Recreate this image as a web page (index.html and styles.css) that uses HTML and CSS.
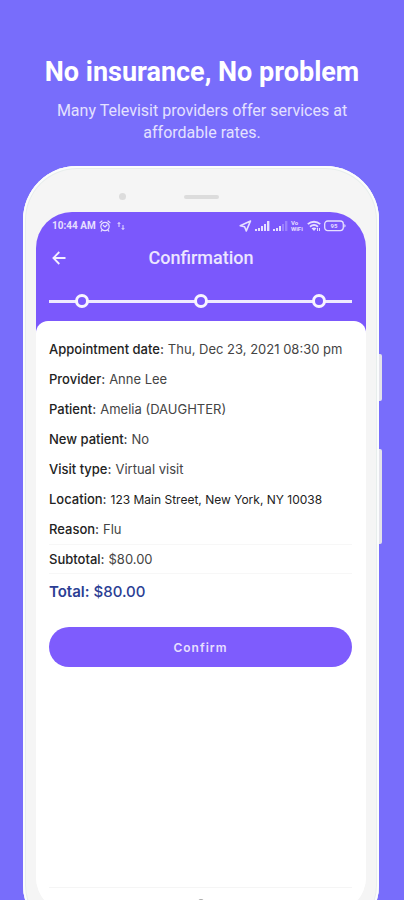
FILE: index.html
```
<!DOCTYPE html>
<html lang="en">
	<head>
		<title>Televisit - Confirmation</title>
		<meta charset="utf-8">
		<meta name="viewport" content="width=device-width, initial-scale=1">
		<link rel="stylesheet" href="styles.css">
	</head>
	<body>
		<header class="intro">
			<h1>No insurance, No problem</h1>
			<p>Many Televisit providers offer services at affordable rates.</p>
		</header>

		<div class="phone">
			<span class="side-key power"></span>
			<span class="side-key volume"></span>
			<div class="bezel">
				<span class="camera"></span>
				<span class="speaker"></span>
			</div>

			<main class="screen">
				<div class="statusbar">
					<span class="time">10:44 AM</span>
					<svg width="12" height="12" viewBox="0 0 12 12" fill="none" stroke="#e6dfff" stroke-width="1.2" stroke-linecap="round">
						<circle cx="6" cy="6.5" r="4.2"/>
						<path d="M1 2.6 3 1M11 2.6 9 1M4.3 5.5 6 7l2-2M3 10.2l-.8.9M9 10.2l.8.9"/>
					</svg>
					<svg class="data" width="8" height="10" viewBox="0 0 8 10" fill="none" stroke="#e6dfff" stroke-width="1">
						<path d="M2 6V1.5M.7 3 2 1.5 3.3 3M6 4v4.5M4.7 7 6 8.5 7.3 7"/>
					</svg>
					<span class="spacer"></span>
					<svg width="13" height="12" viewBox="0 0 13 12" fill="none" stroke="#e6dfff" stroke-width="1.6" stroke-linejoin="round">
						<path d="M11.5 1 1.2 5.7l4.4 1.1 1.7 4.1z"/>
					</svg>
					<svg width="15" height="12" viewBox="0 0 15 12" fill="#e6dfff">
						<path d="M0 9h2v2H0zM3 8h2v3H3zM6 6h2v5H6zM9 4h2v7H9zM12 1h2.4v10H12z"/>
					</svg>
					<svg width="15" height="12" viewBox="0 0 15 12" fill="#e6dfff">
						<path d="M0 9h2v2H0zM3 8h2v3H3zM6 6h2v5H6z"/>
						<path opacity=".3" d="M9 4h2v7H9zM12 1h2.4v10H12z"/>
					</svg>
					<span class="volte">Vo<br>WiFi</span>
					<svg width="14" height="12" viewBox="0 0 14 12" fill="none" stroke="#e6dfff" stroke-width="1.8">
						<path d="M.8 4.2c3.6-3.3 8.8-3.3 12.4 0M3 6.7c2.4-2 5.6-2 8 0"/>
						<path fill="#e6dfff" stroke="none" d="M4.5 8.3c1.6-1.2 3.4-1.2 5 0L7 11zM10 8h1v3h-1zM12 8h1v3h-1z"/>
					</svg>
					<svg width="22" height="12" viewBox="0 0 22 12">
						<rect x=".7" y="1" width="18.6" height="9.6" rx="3" fill="none" stroke="#e6dfff" stroke-width="1.3"/>
						<path d="M20.3 4v3.6q1.3-.4 1.3-1.8T20.3 4z" fill="#e6dfff"/>
						<text class="charge" x="10" y="8.3" text-anchor="middle">95</text>
					</svg>
				</div>

				<nav class="titlebar">
					<button type="button" class="back" aria-label="Back">
						<svg width="14" height="14" viewBox="0 0 14 14" fill="none" stroke="#f3efff" stroke-width="1.8">
							<path d="M13.5 7H1.5M7.3 1 1.4 7l5.9 6"/>
						</svg>
					</button>
					<h2>Confirmation</h2>
				</nav>

				<div class="steps">
					<span class="step"></span>
					<span class="step"></span>
					<span class="step"></span>
				</div>

				<section class="card">
					<dl class="details">
						<div class="row"><dt>Appointment date:</dt><dd>Thu, Dec 23, 2021 08:30 pm</dd></div>
						<div class="row"><dt>Provider:</dt><dd>Anne Lee</dd></div>
						<div class="row"><dt>Patient:</dt><dd>Amelia (DAUGHTER)</dd></div>
						<div class="row"><dt>New patient:</dt><dd>No</dd></div>
						<div class="row"><dt>Visit type:</dt><dd>Virtual visit</dd></div>
						<div class="row"><dt>Location:</dt><dd class="address">123 Main Street, New York, NY 10038</dd></div>
						<div class="row"><dt>Reason:</dt><dd>Flu</dd></div>
						<div class="row subtotal"><dt>Subtotal:</dt><dd>$80.00</dd></div>
						<div class="row total"><dt>Total:</dt><dd>$80.00</dd></div>
					</dl>
					<button type="button" class="confirm">Confirm</button>
					<footer class="bottom"><span class="home"></span></footer>
				</section>
			</main>
		</div>
	</body>
</html>
```
FILE: styles.css
```
* {
	box-sizing: border-box;
}
body {
	margin: 0;
	height: 100vh;
	overflow: hidden;
	background-color: #786dfb;
	font-family: Roboto, sans-serif;
}
.intro {
	padding: 56px 40px 22px;
	text-align: center;
	color: #fff;
}
.intro h1 {
	margin: 0 0 12px;
	font-size: 27px;
	line-height: 32px;
	font-weight: 700;
	white-space: nowrap;
}
.intro p {
	margin: 0;
	font-size: 16px;
	line-height: 22px;
	color: #e4e1ff;
}

/* phone */
.phone {
	position: relative;
	margin: 0 25px 0 23px;
	padding: 0 13px 26px;
	background-color: #f5f5f5;
	border-radius: 54px;
	box-shadow: inset 0 0 0 2px #fbfcfd, inset 0 0 0 3px #e8eeec;
}
.side-key {
	position: absolute;
	left: 100%;
	width: 3px;
	background-color: #e3e2ea;
	border-radius: 0 2px 2px 0;
}
.power {
	top: 188px;
	height: 47px;
}
.volume {
	top: 283px;
	height: 95px;
}
.bezel {
	display: flex;
	justify-content: center;
	align-items: center;
	gap: 58px;
	height: 46px;
	padding: 15px 65px 0 0;
}
.camera {
	width: 7px;
	height: 7px;
	border-radius: 50%;
	background-color: #dcdcdc;
}
.speaker {
	width: 35px;
	height: 4px;
	border-radius: 2px;
	background-color: #dcdcdc;
}
.screen {
	background: linear-gradient(#7b58fc, #7b58fc) top / 100% 130px no-repeat #fff;
	border-radius: 36px;
	overflow: hidden;
}

/* status bar */
.statusbar {
	display: flex;
	align-items: center;
	gap: 3px;
	height: 28px;
	padding: 0 20px 0 16px;
	color: #e6dfff;
}
.time {
	font-size: 10px;
	font-weight: 700;
	line-height: 12px;
}
.data {
	margin-left: 3px;
}
.spacer {
	flex: 1;
}
.volte {
	width: 13px;
	font-size: 6px;
	line-height: 6px;
	font-weight: 700;
}
.charge {
	font-size: 6px;
	font-weight: 700;
	fill: #e6dfff;
}

/* title */
.titlebar {
	display: grid;
	grid-template-columns: 20px 1fr 20px;
	align-items: center;
	height: 36px;
	padding: 0 14px;
}
.back {
	display: flex;
	padding: 2px;
	border: none;
	background: none;
	cursor: pointer;
}
.titlebar h2 {
	margin: 0;
	font-size: 18px;
	line-height: 24px;
	font-weight: 500;
	text-align: center;
	color: #ece6ff;
}
.steps {
	display: flex;
	justify-content: space-between;
	margin: 18px 14px 13px 13px;
	padding: 0 26px;
	background: linear-gradient(#efeaff, #efeaff) center / 100% 3px no-repeat;
}
.step {
	width: 14px;
	height: 14px;
	border: 3px solid #f7f4ff;
	border-radius: 50%;
	background-color: #7b58fc;
}

/* card */
.card {
	padding: 13px 14px 0 13px;
	background-color: #fff;
	border-radius: 12px 12px 0 0;
	font-family: Inter, sans-serif;
}
.details {
	margin: 0;
}
.row {
	display: flex;
	align-items: center;
	gap: 4px;
	height: 30px;
	font-size: 13px;
	white-space: nowrap;
	color: #444;
}
.row dt {
	font-weight: 500;
	color: #222;
}
.row dd {
	margin: 0;
}
.row .address {
	font-size: 12px;
	color: #222;
}
.subtotal {
	border-top: 1px solid #f7f7f7;
	border-bottom: 1px solid #f7f7f7;
}
.total {
	height: 34px;
	font-size: 15px;
	font-weight: 500;
	color: #2b3e94;
}
.total dt {
	font-weight: 600;
	color: #2b3e94;
}
.confirm {
	display: block;
	width: 100%;
	height: 40px;
	margin-top: 19px;
	border: none;
	border-radius: 20px;
	background-color: #7e5cfd;
	color: #e6dfff;
	font-family: Inter, sans-serif;
	font-size: 12px;
	font-weight: 600;
	letter-spacing: 1px;
	cursor: pointer;
}
.bottom {
	margin-top: 220px;
	padding: 11px 0 8px;
	border-top: 1px solid #f5f5f5;
}
.home {
	display: block;
	width: 6px;
	height: 6px;
	margin: 0 auto;
	border-radius: 50%;
	background-color: #aaa;
}
```
